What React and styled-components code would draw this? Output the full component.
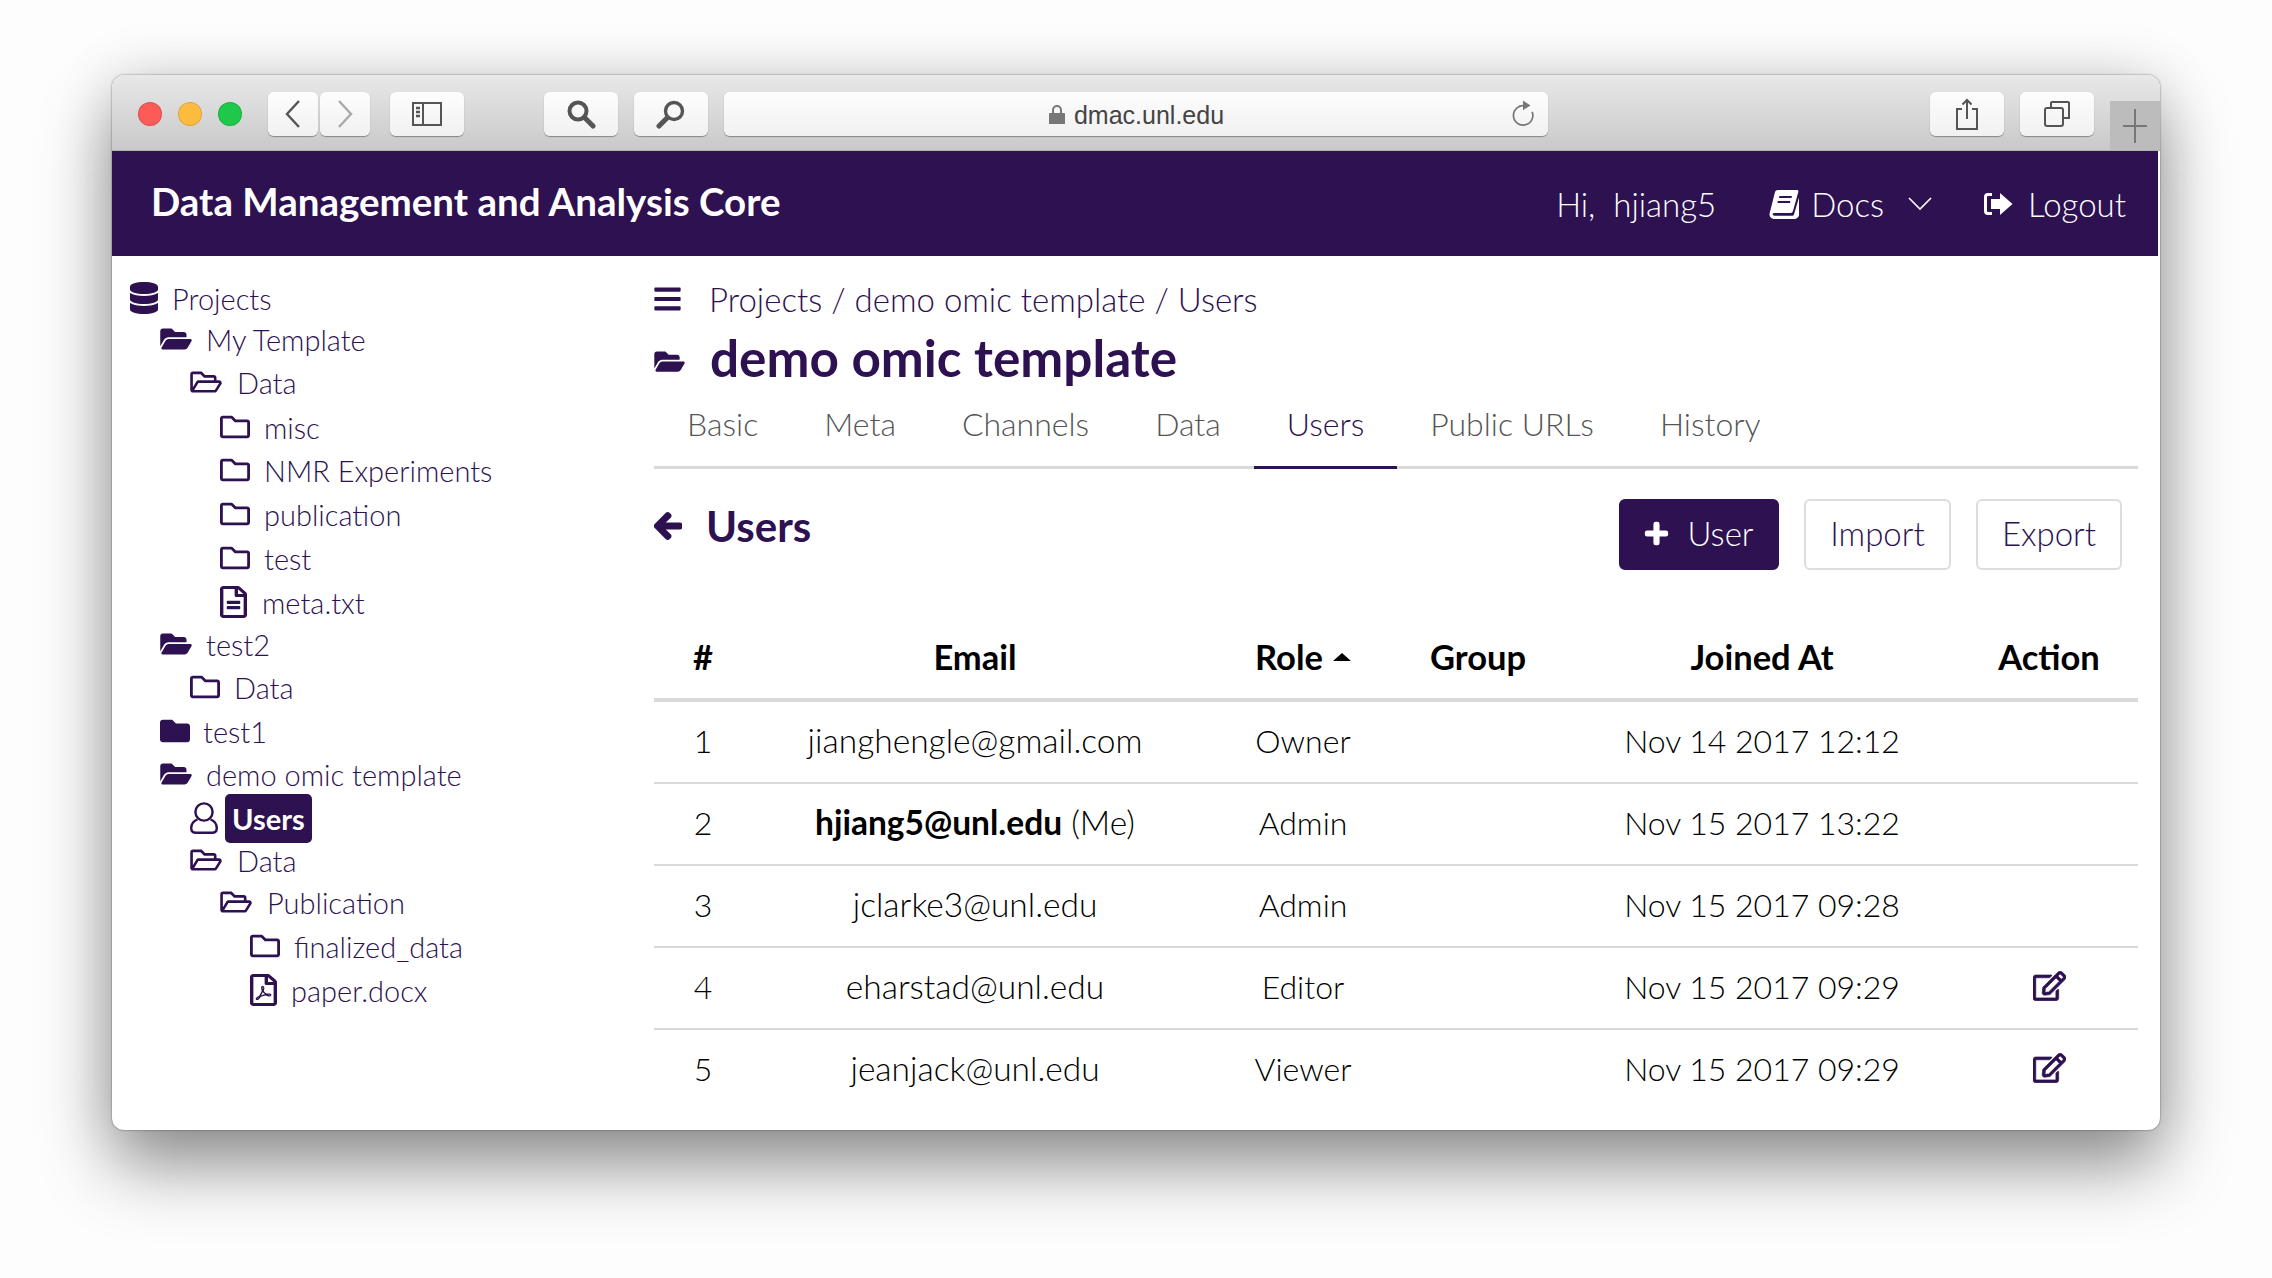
import React from "react";
import styled, { createGlobalStyle } from "styled-components";
import {
  FaArrowLeft,
  FaBars,
  FaDatabase,
  FaFolder,
  FaFolderOpen,
  FaPlus,
  FaRegEdit,
  FaRegFileAlt,
  FaRegFilePdf,
  FaRegFolder,
  FaRegFolderOpen,
} from "react-icons/fa";

const PURPLE = "#2d1150";

const GlobalStyle = createGlobalStyle`
  html, body { margin: 0; background: #fff; }
  body { font-family: Lato, "Open Sans", Arial, sans-serif; color: #000; }
`;

const Page = styled.div`
  width: 2272px;
  height: 1278px;
  overflow: hidden;
  padding: 75px 0 0 112px;
  box-sizing: border-box;
  background: #fdfdfd;
`;

const Window = styled.div`
  width: 2048px;
  height: 1055px;
  background: #fff;
  border-radius: 12px;
  overflow: hidden;
  box-shadow: 0 0 2px rgba(0, 0, 0, 0.55), 0 36px 70px rgba(0, 0, 0, 0.42), 0 0 60px rgba(0, 0, 0, 0.12);
`;

const TitleBar = styled.div`
  height: 76px;
  box-sizing: border-box;
  display: flex;
  padding: 17px 0 0 26px;
  background: linear-gradient(#e8e8e8, #c9c9c9);
  border-bottom: 1px solid #b0b0b0;
`;

const Lights = styled.div`
  display: flex;
  gap: 16px;
  padding-top: 10px;
  margin-right: 26px;
`;

const Light = styled.span`
  width: 24px;
  height: 24px;
  border-radius: 50%;
  background: ${(p) => p.$color};
  box-shadow: inset 0 0 0 1px rgba(0, 0, 0, 0.12);
`;

const ChromeButton = styled.div`
  width: ${(p) => p.$w}px;
  height: 44px;
  margin-right: ${(p) => p.$mr || 0}px;
  flex: none;
  display: flex;
  align-items: center;
  justify-content: center;
  background: linear-gradient(#fdfdfd, #f1f1f1);
  border-radius: 6px;
  box-shadow: 0 1px 1px rgba(0, 0, 0, 0.35);
  color: ${(p) => p.$color || "#555"};
`;

const UrlBar = styled(ChromeButton)`
  position: relative;
  gap: 8px;
  padding-top: 2px;
  box-sizing: border-box;
  font-family: "Liberation Sans", Arial, sans-serif;
  font-size: 25px;
  color: #444;
`;

const Reload = styled.svg`
  position: absolute;
  right: 13px;
  top: 8px;
`;

const NewTab = styled.div`
  width: 50px;
  height: 49px;
  margin: 9px 0 0 16px;
  background: #bcbcbc;
  display: flex;
  align-items: center;
  justify-content: center;
`;

const NavBar = styled.header`
  height: 105px;
  margin-right: 2px;
  box-sizing: border-box;
  padding: 0 32px 0 39px;
  background: ${PURPLE};
  color: #fff;
  display: flex;
  align-items: center;
  justify-content: space-between;
`;

const Brand = styled.div`
  font-size: 38.5px;
  font-weight: 700;
  padding-bottom: 5px;
`;

const NavMenu = styled.nav`
  display: flex;
  align-items: center;
  font-size: 33px;
  font-weight: 300;
`;

const NavItem = styled.div`
  display: flex;
  align-items: center;
  gap: ${(p) => p.$gap || 12}px;
  margin-left: ${(p) => p.$ml || 0}px;
`;

const Main = styled.main`
  display: grid;
  grid-template-columns: 542px 1484px;
`;

const Tree = styled.aside`
  padding-top: 22px;
`;

const TreeRow = styled.div`
  height: 40px;
  margin-top: ${(p) => p.$mt}px;
  padding-left: ${(p) => p.$indent}px;
  display: flex;
  align-items: center;
  gap: ${(p) => p.$gap}px;
  color: ${PURPLE};
  font-size: 29px;
  font-weight: 300;
  svg {
    width: ${(p) => p.$iconW}px;
    height: ${(p) => p.$iconH}px;
    flex: none;
  }
`;

const Selected = styled.span`
  height: 49px;
  padding: 0 7px;
  display: flex;
  align-items: center;
  background: ${PURPLE};
  color: #fff;
  font-weight: 700;
  border-radius: 5px;
`;

const Content = styled.section`
  color: ${PURPLE};
`;

const Crumbs = styled.div`
  height: 46px;
  margin-top: 20px;
  display: flex;
  align-items: center;
  gap: 28px;
  font-size: 33px;
  font-weight: 300;
  svg { width: 27px; height: 30px; }
`;

const ProjectTitle = styled.h1`
  height: 60px;
  margin: 5px 0 0;
  display: flex;
  align-items: center;
  gap: 25px;
  font-size: 51.3px;
  font-weight: 700;
  svg { width: 31px; height: 27px; margin-top: 8px; }
`;

const Tabs = styled.div`
  height: 82px;
  box-sizing: border-box;
  display: flex;
  border-bottom: 3px solid #d9d9d9;
`;

const Tab = styled.div`
  padding: 0 33px 6px;
  height: 82px;
  box-sizing: border-box;
  display: flex;
  align-items: center;
  font-size: 32px;
  font-weight: 300;
  color: ${(p) => (p.$active ? PURPLE : "#555")};
  border-bottom: 3px solid ${(p) => (p.$active ? PURPLE : "transparent")};
`;

const SectionHead = styled.div`
  display: flex;
  justify-content: space-between;
  padding: 30px 16px 0 0;
  height: 71px;
`;

const SectionTitle = styled.h2`
  margin: 0;
  height: 54px;
  display: flex;
  align-items: center;
  gap: 24px;
  font-size: 42px;
  font-weight: 700;
  svg { width: 28px; height: 30px; stroke: currentColor; stroke-width: 40; }
`;

const Actions = styled.div`
  display: flex;
  gap: 25px;
`;

const Button = styled.button`
  width: ${(p) => p.$w}px;
  height: 71px;
  box-sizing: border-box;
  display: flex;
  align-items: center;
  justify-content: center;
  gap: 18px;
  padding: 0 0 3px;
  font: 300 33px Lato, sans-serif;
  border-radius: 6px;
  border: 2px solid ${(p) => (p.$primary ? PURPLE : "#ddd")};
  background: ${(p) => (p.$primary ? PURPLE : "#fff")};
  color: ${(p) => (p.$primary ? "#fff" : PURPLE)};
  svg { width: 25px; height: 25px; stroke: currentColor; stroke-width: 30; }
`;

const Table = styled.table`
  width: 1484px;
  margin-top: 57px;
  border-collapse: collapse;
  table-layout: fixed;
  color: #000;
  font-size: 32px;
`;

const Th = styled.th`
  width: ${(p) => p.$w - (p.$pr || 0)}px;
  height: 59px;
  padding: 0 ${(p) => p.$pr || 0}px 12px 0;
  box-sizing: content-box;
  text-align: center;
  font-weight: 700;
  font-size: 34.5px;
  border-bottom: 4px solid #d9d9d9;
`;

const Caret = styled.span`
  display: inline-block;
  margin-left: 10px;
  vertical-align: 9px;
  border: 9px solid transparent;
  border-top: 0;
  border-bottom: 8px solid #000;
`;

const Row = styled.tr`
  border-bottom: 2px solid #d9d9d9;
  &:last-child { border-bottom: 0; }
`;

const Td = styled.td`
  height: 76px;
  padding: 0 ${(p) => p.$pr || 0}px 4px 0;
  text-align: center;
  font-weight: 300;
  font-size: ${(p) => p.$size || 32}px;
  b { font-weight: 700; }
`;

const EditLink = styled.span`
  color: ${PURPLE};
  svg { width: 33px; height: 30px; display: block; margin: 0 auto; stroke: currentColor; stroke-width: 12; }
`;

// the fa outline user has a smaller head than the one in this tree
const UserOutline = () => (
  <svg viewBox="0 0 28 32" fill="none" stroke="currentColor" strokeWidth="2.4">
    <circle cx="14" cy="10" r="8.6" />
    <path d="M7.500 17.500C3.500 19 1.200 22 1.200 26c0 3 1.800 4.800 4.800 4.800h16c3 0 4.800-1.800 4.800-4.800 0-4-2.300-7-6.300-8.500" />
  </svg>
);

const OPEN = { Icon: FaFolderOpen, iconW: 32, iconH: 28, gap: 14 };
const OPEN_LINE = { Icon: FaRegFolderOpen, iconW: 32, iconH: 28, gap: 15 };
const SHUT_LINE = { Icon: FaRegFolder, iconW: 30, iconH: 30, gap: 14 };

const TREE = [
  { label: "Projects", Icon: FaDatabase, iconW: 28, iconH: 32, gap: 14, indent: 18, mt: 0 },
  { label: "My Template", ...OPEN, indent: 48, mt: 1 },
  { label: "Data", ...OPEN_LINE, indent: 78, mt: 3 },
  { label: "misc", ...SHUT_LINE, indent: 108, mt: 5 },
  { label: "NMR Experiments", ...SHUT_LINE, indent: 108, mt: 3 },
  { label: "publication", ...SHUT_LINE, indent: 108, mt: 4 },
  { label: "test", ...SHUT_LINE, indent: 108, mt: 4 },
  { label: "meta.txt", Icon: FaRegFileAlt, iconW: 27, iconH: 32, gap: 15, stretch: true, indent: 108, mt: 4 },
  { label: "test2", ...OPEN, indent: 48, mt: 2 },
  { label: "Data", ...SHUT_LINE, indent: 78, mt: 3 },
  { label: "test1", Icon: FaFolder, iconW: 30, iconH: 30, gap: 13, indent: 48, mt: 4 },
  { label: "demo omic template", ...OPEN, indent: 48, mt: 3 },
  { label: "Users", Icon: UserOutline, iconW: 28, iconH: 32, gap: 7, indent: 78, mt: 4, selected: true },
  { label: "Data", ...OPEN_LINE, indent: 78, mt: 2 },
  { label: "Publication", ...OPEN_LINE, indent: 108, mt: 2 },
  { label: "finalized_data", ...SHUT_LINE, indent: 138, mt: 4 },
  { label: "paper.docx", Icon: FaRegFilePdf, iconW: 27, iconH: 32, gap: 14, stretch: true, indent: 138, mt: 4 },
];

const TABS = ["Basic", "Meta", "Channels", "Data", "Users", "Public URLs", "History"];

const USERS = [
  { email: "jianghengle@gmail.com", role: "Owner", joined: "Nov 14 2017 12:12" },
  { email: "hjiang5@unl.edu", me: true, role: "Admin", joined: "Nov 15 2017 13:22" },
  { email: "jclarke3@unl.edu", role: "Admin", joined: "Nov 15 2017 09:28" },
  { email: "eharstad@unl.edu", role: "Editor", joined: "Nov 15 2017 09:29", edit: true },
  { email: "jeanjack@unl.edu", role: "Viewer", joined: "Nov 15 2017 09:29", edit: true },
];

function Browser() {
  return (
    <TitleBar>
      <Lights>
        <Light $color="#fc5b57" />
        <Light $color="#fdbc40" />
        <Light $color="#1fc84a" />
      </Lights>
      <ChromeButton $w={50} $mr={2}>
        <svg width="18" height="30" viewBox="0 0 18 30" fill="none" stroke="currentColor" strokeWidth="2.4">
          <path d="M15 2 3 15l12 13" />
        </svg>
      </ChromeButton>
      <ChromeButton $w={50} $mr={20} $color="#aaa">
        <svg width="18" height="30" viewBox="0 0 18 30" fill="none" stroke="currentColor" strokeWidth="2.4">
          <path d="m3 2 12 13L3 28" />
        </svg>
      </ChromeButton>
      <ChromeButton $w={74} $mr={80}>
        <svg width="30" height="24" viewBox="0 0 30 24" fill="none" stroke="currentColor" strokeWidth="2">
          <rect x="1" y="1" width="28" height="22" />
          <path d="M11 1v22" />
          <path d="M4 6h4M4 10h4M4 14h4" strokeWidth="2.4" />
        </svg>
      </ChromeButton>
      <ChromeButton $w={74} $mr={16}>
        <svg width="30" height="30" viewBox="0 0 30 30" fill="none" stroke="currentColor" strokeWidth="4">
          <circle cx="12" cy="12" r="8.5" />
          <path d="m19 19 8 8" strokeLinecap="round" strokeWidth="5" />
        </svg>
      </ChromeButton>
      <ChromeButton $w={74} $mr={16}>
        <svg width="30" height="30" viewBox="0 0 30 30" fill="none" stroke="currentColor" strokeWidth="3.4">
          <circle cx="18" cy="12" r="8.5" />
          <path d="m11 19-8 8" strokeLinecap="round" strokeWidth="5" />
        </svg>
      </ChromeButton>
      <UrlBar $w={824} $mr={382}>
        <svg width="18" height="20" viewBox="0 0 18 20" fill="#777">
          <path d="M2 8h14a1 1 0 0 1 1 1v10H1V9a1 1 0 0 1 1-1Z" />
          <path d="M5 8V5a4 4 0 0 1 8 0v3" fill="none" stroke="#777" strokeWidth="2" />
        </svg>
        dmac.unl.edu
        <Reload width="24" height="28" viewBox="0 0 22 26" fill="none" stroke="#777" strokeWidth="1.6">
          <path d="M13 5.500A9 9 0 1 0 19.500 11" />
          <path d="M11 0.500 18 5l-7 4.500Z" fill="#777" stroke="none" />
        </Reload>
      </UrlBar>
      <ChromeButton $w={74} $mr={16}>
        <svg width="24" height="32" viewBox="0 0 24 32" fill="none" stroke="currentColor" strokeWidth="2">
          <path d="M7 11H2v20h20V11h-5" />
          <path d="M12 21V2M7.500 6.500 12 2l4.500 4.500" />
        </svg>
      </ChromeButton>
      <ChromeButton $w={74}>
        <svg width="26" height="26" viewBox="0 0 26 26" fill="none" stroke="currentColor" strokeWidth="2">
          <rect x="1" y="7" width="18" height="18" rx="2" />
          <path d="M7 7V2a1 1 0 0 1 1-1h16a1 1 0 0 1 1 1v15h-6" />
        </svg>
      </ChromeButton>
      <NewTab>
        <svg width="24" height="34" viewBox="0 0 24 34" stroke="#777" strokeWidth="2">
          <path d="M12 0v34M0 17h24" />
        </svg>
      </NewTab>
    </TitleBar>
  );
}

function Header() {
  return (
    <NavBar>
      <Brand>Data Management and Analysis Core</Brand>
      <NavMenu>
        <NavItem>Hi,&nbsp; hjiang5</NavItem>
        <NavItem $ml={53}>
          <svg width="30" height="30" viewBox="0 0 30 30" fill="#fff">
            <path d="M9 1h19c1.200 0 1.600 1 1.300 2L24 22c-.4 1.300-1 2-2.400 2H5.500c-1.600 0-2.200 1-1.700 1.800.4.7 1.100 1 2 1h17.500c.8 0 1.300-.3 1.600-1L30 8.500v18c-1 2-2.300 3.500-4.800 3.500H5.500C2.500 30 .5 27.800.5 25.500c0-.8.1-1.500.4-2.300L6 3c.4-1.300 1.500-2 3-2Zm1.500 6-.6 2h12.500l.6-2Zm-1.500 5-.6 2h12.500l.6-2Z" fillRule="evenodd" />
          </svg>
          Docs
          <svg width="24" height="14" viewBox="0 0 24 14" fill="none" stroke="#fff" strokeWidth="1.6" style={{ marginLeft: 12 }}>
            <path d="m1 1 11 11L23 1" />
          </svg>
        </NavItem>
        <NavItem $ml={51} $gap={15}>
          <svg width="30" height="26" viewBox="0 0 30 26" fill="#fff">
            <path d="M9 2H5a4 4 0 0 0-4 4v14a4 4 0 0 0 4 4h4v-3H5a1 1 0 0 1-1-1V6a1 1 0 0 1 1-1h4Z" />
            <path d="M17 2 29.500 13 17 24v-6H8V8h9Z" />
          </svg>
          Logout
        </NavItem>
      </NavMenu>
    </NavBar>
  );
}

function Sidebar() {
  return (
    <Tree>
      {TREE.map((node, i) => (
        <TreeRow key={i} $indent={node.indent} $mt={node.mt} $gap={node.gap} $iconW={node.iconW} $iconH={node.iconH}>
          <node.Icon preserveAspectRatio={node.stretch ? "none" : undefined} />
          {node.selected ? <Selected>{node.label}</Selected> : <span>{node.label}</span>}
        </TreeRow>
      ))}
    </Tree>
  );
}

export default function App() {
  return (
    <Page>
      <GlobalStyle />
      <Window>
        <Browser />
        <Header />
        <Main>
          <Sidebar />
          <Content>
            <Crumbs>
              <FaBars />
              Projects / demo omic template / Users
            </Crumbs>
            <ProjectTitle>
              <FaFolderOpen />
              demo omic template
            </ProjectTitle>
            <Tabs>
              {TABS.map((t) => (
                <Tab key={t} $active={t === "Users"}>{t}</Tab>
              ))}
            </Tabs>
            <SectionHead>
              <SectionTitle>
                <FaArrowLeft />
                Users
              </SectionTitle>
              <Actions>
                <Button $primary $w={160}><FaPlus />User</Button>
                <Button $w={147}>Import</Button>
                <Button $w={146}>Export</Button>
              </Actions>
            </SectionHead>
            <Table>
              <thead>
                <tr>
                  <Th $w={98}>#</Th>
                  <Th $w={446}>Email</Th>
                  <Th $w={210}>Role<Caret /></Th>
                  <Th $w={140}>Group</Th>
                  <Th $w={428}>Joined At</Th>
                  <Th $w={162} $pr={16}>Action</Th>
                </tr>
              </thead>
              <tbody>
                {USERS.map((u, i) => (
                  <Row key={u.email}>
                    <Td>{i + 1}</Td>
                    <Td $size={33.5}>{u.me ? <><b>{u.email}</b> (Me)</> : u.email}</Td>
                    <Td>{u.role}</Td>
                    <Td />
                    <Td>{u.joined}</Td>
                    <Td $pr={16}>{u.edit && <EditLink><FaRegEdit /></EditLink>}</Td>
                  </Row>
                ))}
              </tbody>
            </Table>
          </Content>
        </Main>
      </Window>
    </Page>
  );
}
